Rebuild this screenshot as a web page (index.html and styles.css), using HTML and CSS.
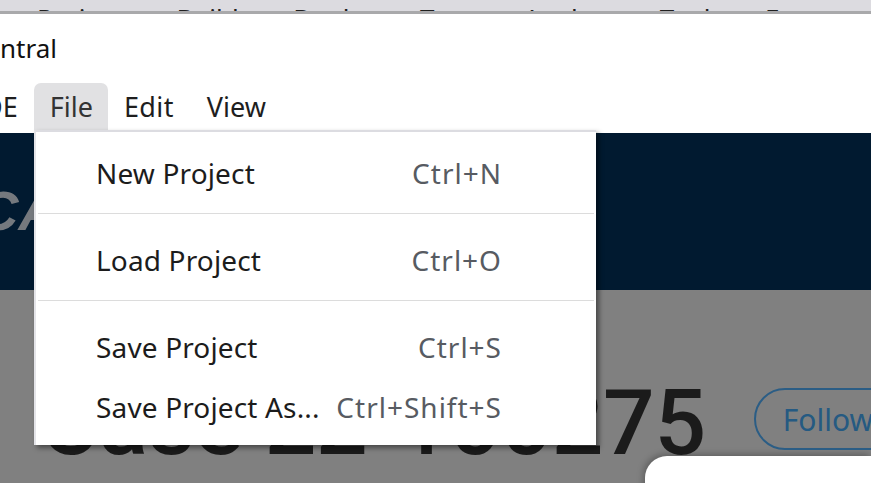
FILE: index.html
```html
<!DOCTYPE html>
<html lang="en">
<head>
<meta charset="utf-8">
<title>Central</title>
<link rel="stylesheet" href="styles.css">
</head>
<body>
<div class="behind-bar">
  <span class="bw">Projects</span><span class="bw">Builds</span><span class="bw">Deploy</span><span class="bw">Tests</span><span class="bw">Analyze</span><span class="bw">Tools</span><span class="bw">Extras</span>
</div>
<div class="window">
  <div class="title-row"><span class="title">ntral</span></div>
  <div class="menubar">
    <span class="mitem first">DE</span>
    <span class="mitem active">File</span>
    <span class="mitem">Edit</span>
    <span class="mitem">View</span>
  </div>
  <div class="hero"><span class="logo">CA</span></div>
  <div class="page">
    <div class="case-row">
      <h1 class="case-title">Case 22-100275</h1>
      <button class="follow">Follow</button>
    </div>
    <div class="card"></div>
  </div>
  <div class="dropdown">
    <div class="ditem"><span class="dlabel">New Project</span><span class="dkey">Ctrl+N</span></div>
    <div class="sep"></div>
    <div class="ditem"><span class="dlabel">Load Project</span><span class="dkey">Ctrl+O</span></div>
    <div class="sep"></div>
    <div class="ditem"><span class="dlabel">Save Project</span><span class="dkey">Ctrl+S</span></div>
    <div class="ditem"><span class="dlabel">Save Project As...</span><span class="dkey">Ctrl+Shift+S</span></div>
  </div>
</div>
</body>
</html>
```
FILE: styles.css
```css
html, body {
  margin: 0;
  padding: 0;
}
body {
  width: 871px;
  height: 483px;
  overflow: hidden;
  font-family: "Noto Sans", "Open Sans", sans-serif;
  background: #ffffff;
}
.behind-bar {
  height: 11px;
  background: #dcdbe0;
  border-bottom: 3px solid #a9a9ab;
  overflow: hidden;
  display: flex;
  gap: 42px;
  padding-left: 37px;
  font-size: 26px;
  line-height: 26px;
  color: #202020;
}
.bw {
  display: block;
  padding-top: 5px;
}
.window {
  position: relative;
  background: #ffffff;
  height: 469px;
}
.title-row {
  height: 51px;
  padding-top: 18px;
  font-size: 26px;
  line-height: 32px;
  color: #111111;
}
.title {
  display: block;
}
.menubar {
  display: flex;
  height: 50px;
  font-size: 27px;
  line-height: 47px;
  color: #1e1e1e;
}
.mitem {
  padding: 0 16px;
  height: 47px;
  border-radius: 7px 7px 0 0;
}
.mitem.first {
  margin-left: -33px;
}
.mitem.active {
  background: #e1e1e3;
  color: #333333;
  padding: 0 15px 0 16px;
}
.mitem.active + .mitem {
  padding-right: 17px;
  letter-spacing: 0.4px;
}
.hero {
  height: 157px;
  background: #011a30;
  overflow: hidden;
}
.logo {
  display: block;
  margin-left: -22px;
  padding-top: 46px;
  font-family: "Liberation Sans", sans-serif;
  font-weight: 700;
  font-style: italic;
  font-size: 56px;
  line-height: 64px;
  color: #75797e;
}
.page {
  background: #808080;
  height: 193px;
  overflow: hidden;
}
.case-row {
  display: flex;
  align-items: flex-start;
  padding-left: 40px;
  padding-top: 88px;
}
.case-title {
  margin: 0;
  font-family: Roboto, "Liberation Sans", sans-serif;
  font-weight: 500;
  font-size: 91px;
  line-height: 91px;
  letter-spacing: -0.4px;
  color: #1b1b1b;
  white-space: nowrap;
}
.follow {
  margin-left: 48px;
  margin-top: 10px;
  height: 62px;
  padding: 0 30px 0 27px;
  border: 2px solid #2b5d85;
  border-radius: 31px;
  background: transparent;
  font-family: "Noto Sans", sans-serif;
  font-size: 30px;
  color: #255a82;
  white-space: nowrap;
  flex-shrink: 0;
}
.card {
  margin-top: -13px;
  margin-left: 645px;
  height: 60px;
  background: #ffffff;
  border-radius: 22px 0 0 0;
  box-shadow: -2px -2px 6px rgba(0, 0, 0, 0.25);
}
.dropdown {
  position: absolute;
  left: 34px;
  top: 116px;
  width: 560px;
  padding: 11px 0 8px;
  background: #ffffff;
  border-top: 2px solid #dcdce1;
  border-left: 2px solid #e4e4e8;
  box-shadow: 3px 3px 5px rgba(0, 0, 0, 0.45);
}
.ditem {
  display: flex;
  justify-content: space-between;
  height: 60px;
  padding: 0 94px 0 60px;
  font-size: 28px;
  line-height: 60px;
  color: #1c1c1c;
  white-space: nowrap;
}
.dlabel {
  letter-spacing: 0.15px;
}
.dkey {
  color: #575b62;
  letter-spacing: 1px;
}
.sep {
  height: 1px;
  margin: 10px 2px 16px 2px;
  background: #dcdcdc;
}
```
